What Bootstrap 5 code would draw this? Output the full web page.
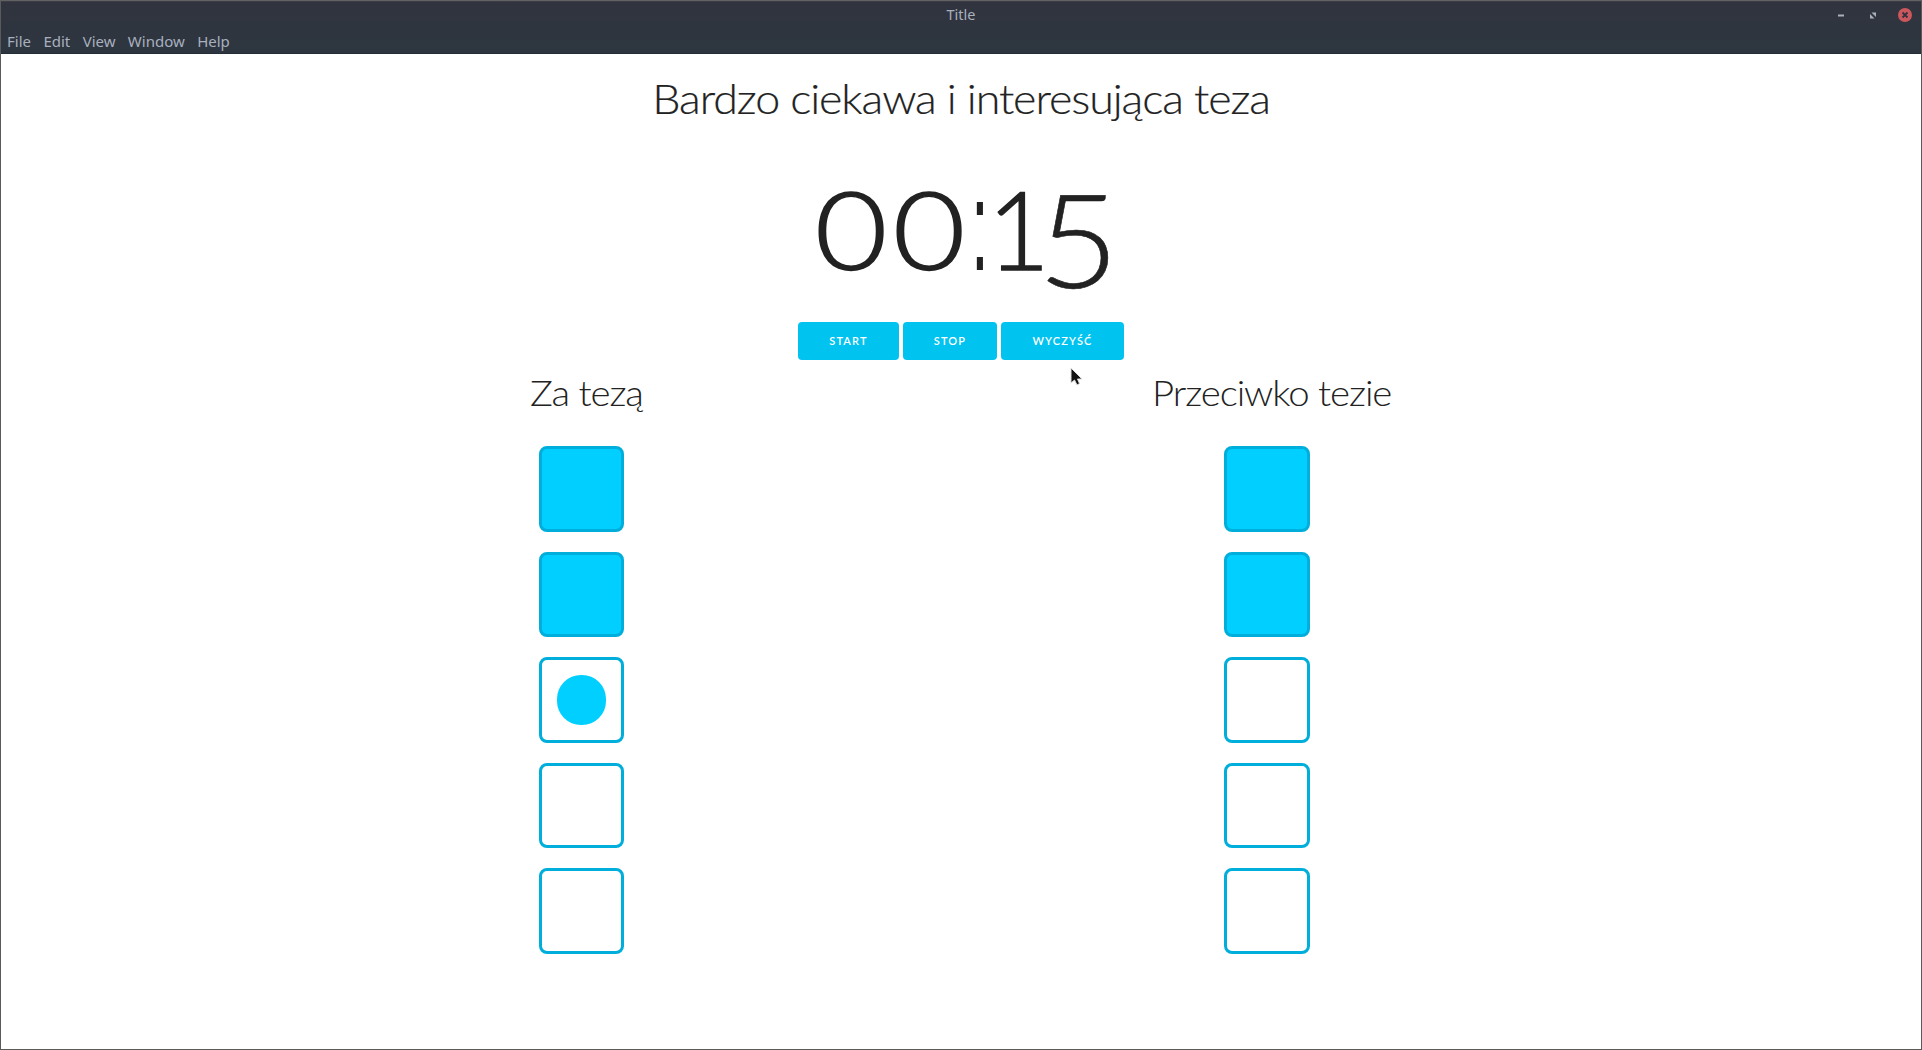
<!DOCTYPE html>
<html lang="pl">
<head>
<meta charset="utf-8">
<title>Title</title>
<link href="https://cdn.jsdelivr.net/npm/bootstrap@5.3.0/dist/css/bootstrap.min.css" rel="stylesheet">
<style>
body{font-family:Lato,"Liberation Sans",sans-serif;color:#222;background:#fff}
.window{height:1050px;border:1px solid #5a5a5a;border-top-color:#626262;position:relative}
.chrome{height:53px;background:linear-gradient(#31343f,#2d3640);color:#a8b0be;font-family:"Noto Sans",sans-serif;font-size:15px;border-top:1px solid #3a3d47;border-bottom:1px solid #252d36}
.titlebar{height:27px}
.titlebar .caption{display:block;line-height:25px;font-size:14.5px}
.win-icons{right:7px;top:4px}
.menubar{height:24px;line-height:24px;padding-left:6px;gap:12.4px}
.menubar a{color:inherit;text-decoration:none}
h1,h2{font-weight:300;margin:0;white-space:nowrap;letter-spacing:-1px}
h1{font-size:42px;line-height:50px;padding-top:19px;transform:scaleX(1.066);-webkit-text-stroke:.2px #222}
h2{font-size:36px;line-height:45px;transform:scaleX(1.065);transform-origin:left}
.clock{font-size:108px;line-height:130px;font-weight:300;margin-top:38px;height:150px;padding-right:1px}
.clock span{display:inline-block;text-align:center}
.clock .d0{width:78px;transform:scaleX(1.16);-webkit-text-stroke:1.4px #222}
.clock .dc{width:36px;margin:0 -6px;font-family:"Liberation Sans",sans-serif;font-size:128px;font-weight:400;transform:scaleX(.5)}
.clock .d1{width:63px;margin:0 -3px 0 -5px;-webkit-text-stroke:1.4px #222}
.clock .d5{width:62px;transform:translateY(10px) scale(1.3,1.2);-webkit-text-stroke:.5px #222}
.btn-deck{gap:4px;margin-top:11px}
.btn-deck .btn{height:38px;padding:0;border:0;border-radius:4px;background:#00c3f0;color:#fff;font-size:11px;font-weight:600;letter-spacing:1.15px;line-height:38px}
.b1{width:101px}.b2{width:94px}.b3{width:123px}
.debate{padding-top:10px}
.side-a{margin-left:529px;width:112px}
.side-b{margin-right:530px;width:239px}
.tiles{gap:20px;margin-top:31px}
.tile{width:85px;height:85.5px;border:3px solid #00aedb;border-radius:8px}
.tile.on{background:#00cfff}
.dot{width:49px;height:50px;border-radius:24px;background:#00cfff}
.side-a .tiles{padding-left:9px}
.side-b .tiles{padding-left:72px}
.side-b .tile{width:86px}
.pointer{left:1069px;top:366px}
</style>
</head>
<body>
<div class="window">
  <header class="chrome">
    <div class="titlebar position-relative text-center"><span class="caption">Title</span>
      <svg class="win-icons position-absolute" width="82" height="18" viewBox="0 0 82 18">
        <path d="M6 8.500h6v2H6z" fill="#a8b0be"/>
        <path d="M39.500 6.500h4.500v4.500zM38 8v4.500h4.500z" fill="#a8b0be"/>
        <circle cx="73" cy="9" r="7" fill="#cc575d"/><path d="M70.5 6.500l5 5m0-5l-5 5" stroke="#2f343f" stroke-width="1.8"/>
      </svg>
    </div>
    <nav class="menubar d-flex"><a>File</a><a>Edit</a><a>View</a><a>Window</a><a>Help</a></nav>
  </header>
  <main>
    <h1 class="text-center">Bardzo ciekawa i interesująca teza</h1>
    <div class="clock d-flex justify-content-center align-items-baseline"><span class="d0">0</span><span class="d0">0</span><span class="dc">:</span><span class="d1">1</span><span class="d5">5</span></div>
    <div class="btn-deck d-flex justify-content-center">
      <button class="btn b1">START</button><button class="btn b2">STOP</button><button class="btn b3">WYCZYŚĆ</button>
    </div>
    <div class="debate d-flex justify-content-between">
      <section class="side-a"><h2>Za tezą</h2>
        <div class="tiles d-flex flex-column"><div class="tile on"></div><div class="tile on"></div><div class="tile d-flex align-items-center justify-content-center"><div class="dot"></div></div><div class="tile"></div><div class="tile"></div></div>
      </section>
      <section class="side-b"><h2>Przeciwko tezie</h2>
        <div class="tiles d-flex flex-column"><div class="tile on"></div><div class="tile on"></div><div class="tile"></div><div class="tile"></div><div class="tile"></div></div>
      </section>
    </div>
  </main>
  <svg class="pointer position-absolute" width="16" height="20" viewBox="0 0 16 20"><path d="M1 1v15l3.500-3 2.500 5 2.500-1.500-2-4.500H12z" fill="#111" stroke="#ddd"/></svg>
</div>
<script src="https://cdn.jsdelivr.net/npm/bootstrap@5.3.0/dist/js/bootstrap.bundle.min.js"></script>
</body>
</html>
